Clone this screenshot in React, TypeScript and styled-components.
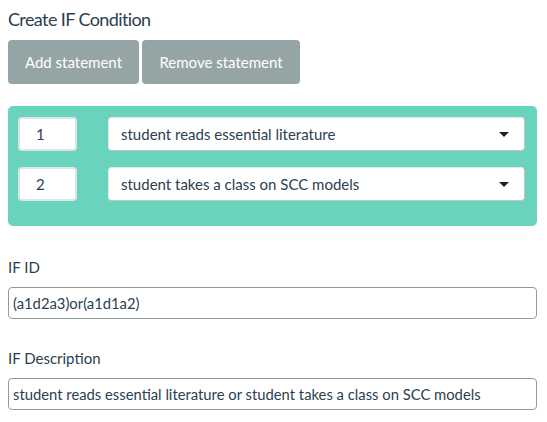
import React from "react";
import styled, { createGlobalStyle } from "styled-components";

const Global = createGlobalStyle`
  body {
    margin: 8px;
    font-family: Lato, "Open Sans", sans-serif;
    color: #2c3e50;
    background: #ffffff;
  }
`;

const Page = styled.div`
  display: flex;
  flex-direction: column;
  width: 529px;
`;

const Title = styled.h4`
  margin: 0;
  font-size: 18px;
  font-weight: 400;
  letter-spacing: -0.6px;
  line-height: 22px;
  color: #2c3e50;
`;

const Toolbar = styled.div`
  display: flex;
  gap: 3px;
  margin-top: 10px;
`;

const Button = styled.button<{ $w: number }>`
  width: ${(p) => p.$w}px;
  height: 44px;
  border: none;
  border-radius: 4px;
  background: #95a5a6;
  color: #ffffff;
  font-family: Lato, sans-serif;
  font-size: 15px;
  padding: 0;
`;

const Panel = styled.div`
  margin-top: 22px;
  background: #69d3be;
  border-radius: 5px;
  padding: 11px 12px 25px 10px;
  display: flex;
  flex-direction: column;
  gap: 16px;
`;

const Row = styled.div`
  display: flex;
  align-items: center;
  gap: 31px;
`;

const NumberBox = styled.div`
  box-sizing: border-box;
  width: 59px;
  height: 34px;
  border: 2px solid #dce4e8;
  border-radius: 4px;
  background: #fff;
  display: flex;
  align-items: center;
  padding-left: 16px;
  font-size: 15px;
  color: #2c3e50;
`;

const Select = styled.div`
  box-sizing: border-box;
  flex: 1;
  height: 34px;
  background: #fff;
  border-radius: 4px;
  border: 1px solid #e6e6e6;
  border-right-color: #c4c4c4;
  border-bottom-color: #c4c4c4;
  display: flex;
  align-items: center;
  justify-content: space-between;
  padding: 0 15px 0 12px;
  font-size: 15px;
  color: #2c3e50;
`;

const Caret = styled.span`
  width: 0;
  height: 0;
  border-left: 5px solid transparent;
  border-right: 5px solid transparent;
  border-top: 5px solid #222;
  margin-top: 1px;
`;

const Field = styled.div<{ $top: number }>`
  display: flex;
  flex-direction: column;
  margin-top: ${(p) => p.$top}px;
`;

const Label = styled.label`
  font-size: 15px;
  line-height: 18px;
  color: #2c3e50;
`;

const TextBox = styled.div`
  box-sizing: border-box;
  margin-top: 11px;
  height: 32px;
  border: 1px solid #8c9d9d;
  border-radius: 4px;
  display: flex;
  align-items: center;
  padding-left: 4px;
  font-size: 14.8px;
  color: #2c3e50;
`;

const statements = [
  { n: "1", text: "student reads essential literature" },
  { n: "2", text: "student takes a class on SCC models" },
];

export default function App() {
  return (
    <>
      <Global />
      <Page>
        <Title>Create IF Condition</Title>
        <Toolbar>
          <Button $w={131}>Add statement</Button>
          <Button $w={158}>Remove statement</Button>
        </Toolbar>
        <Panel>
          {statements.map((s) => (
            <Row key={s.n}>
              <NumberBox>{s.n}</NumberBox>
              <Select>
                <span>{s.text}</span>
                <Caret />
              </Select>
            </Row>
          ))}
        </Panel>
        <Field $top={32}>
          <Label>IF ID</Label>
          <TextBox>(a1d2a3)or(a1d1a2)</TextBox>
        </Field>
        <Field $top={30}>
          <Label>IF Description</Label>
          <TextBox>student reads essential literature or student takes a class on SCC models</TextBox>
        </Field>
      </Page>
    </>
  );
}
